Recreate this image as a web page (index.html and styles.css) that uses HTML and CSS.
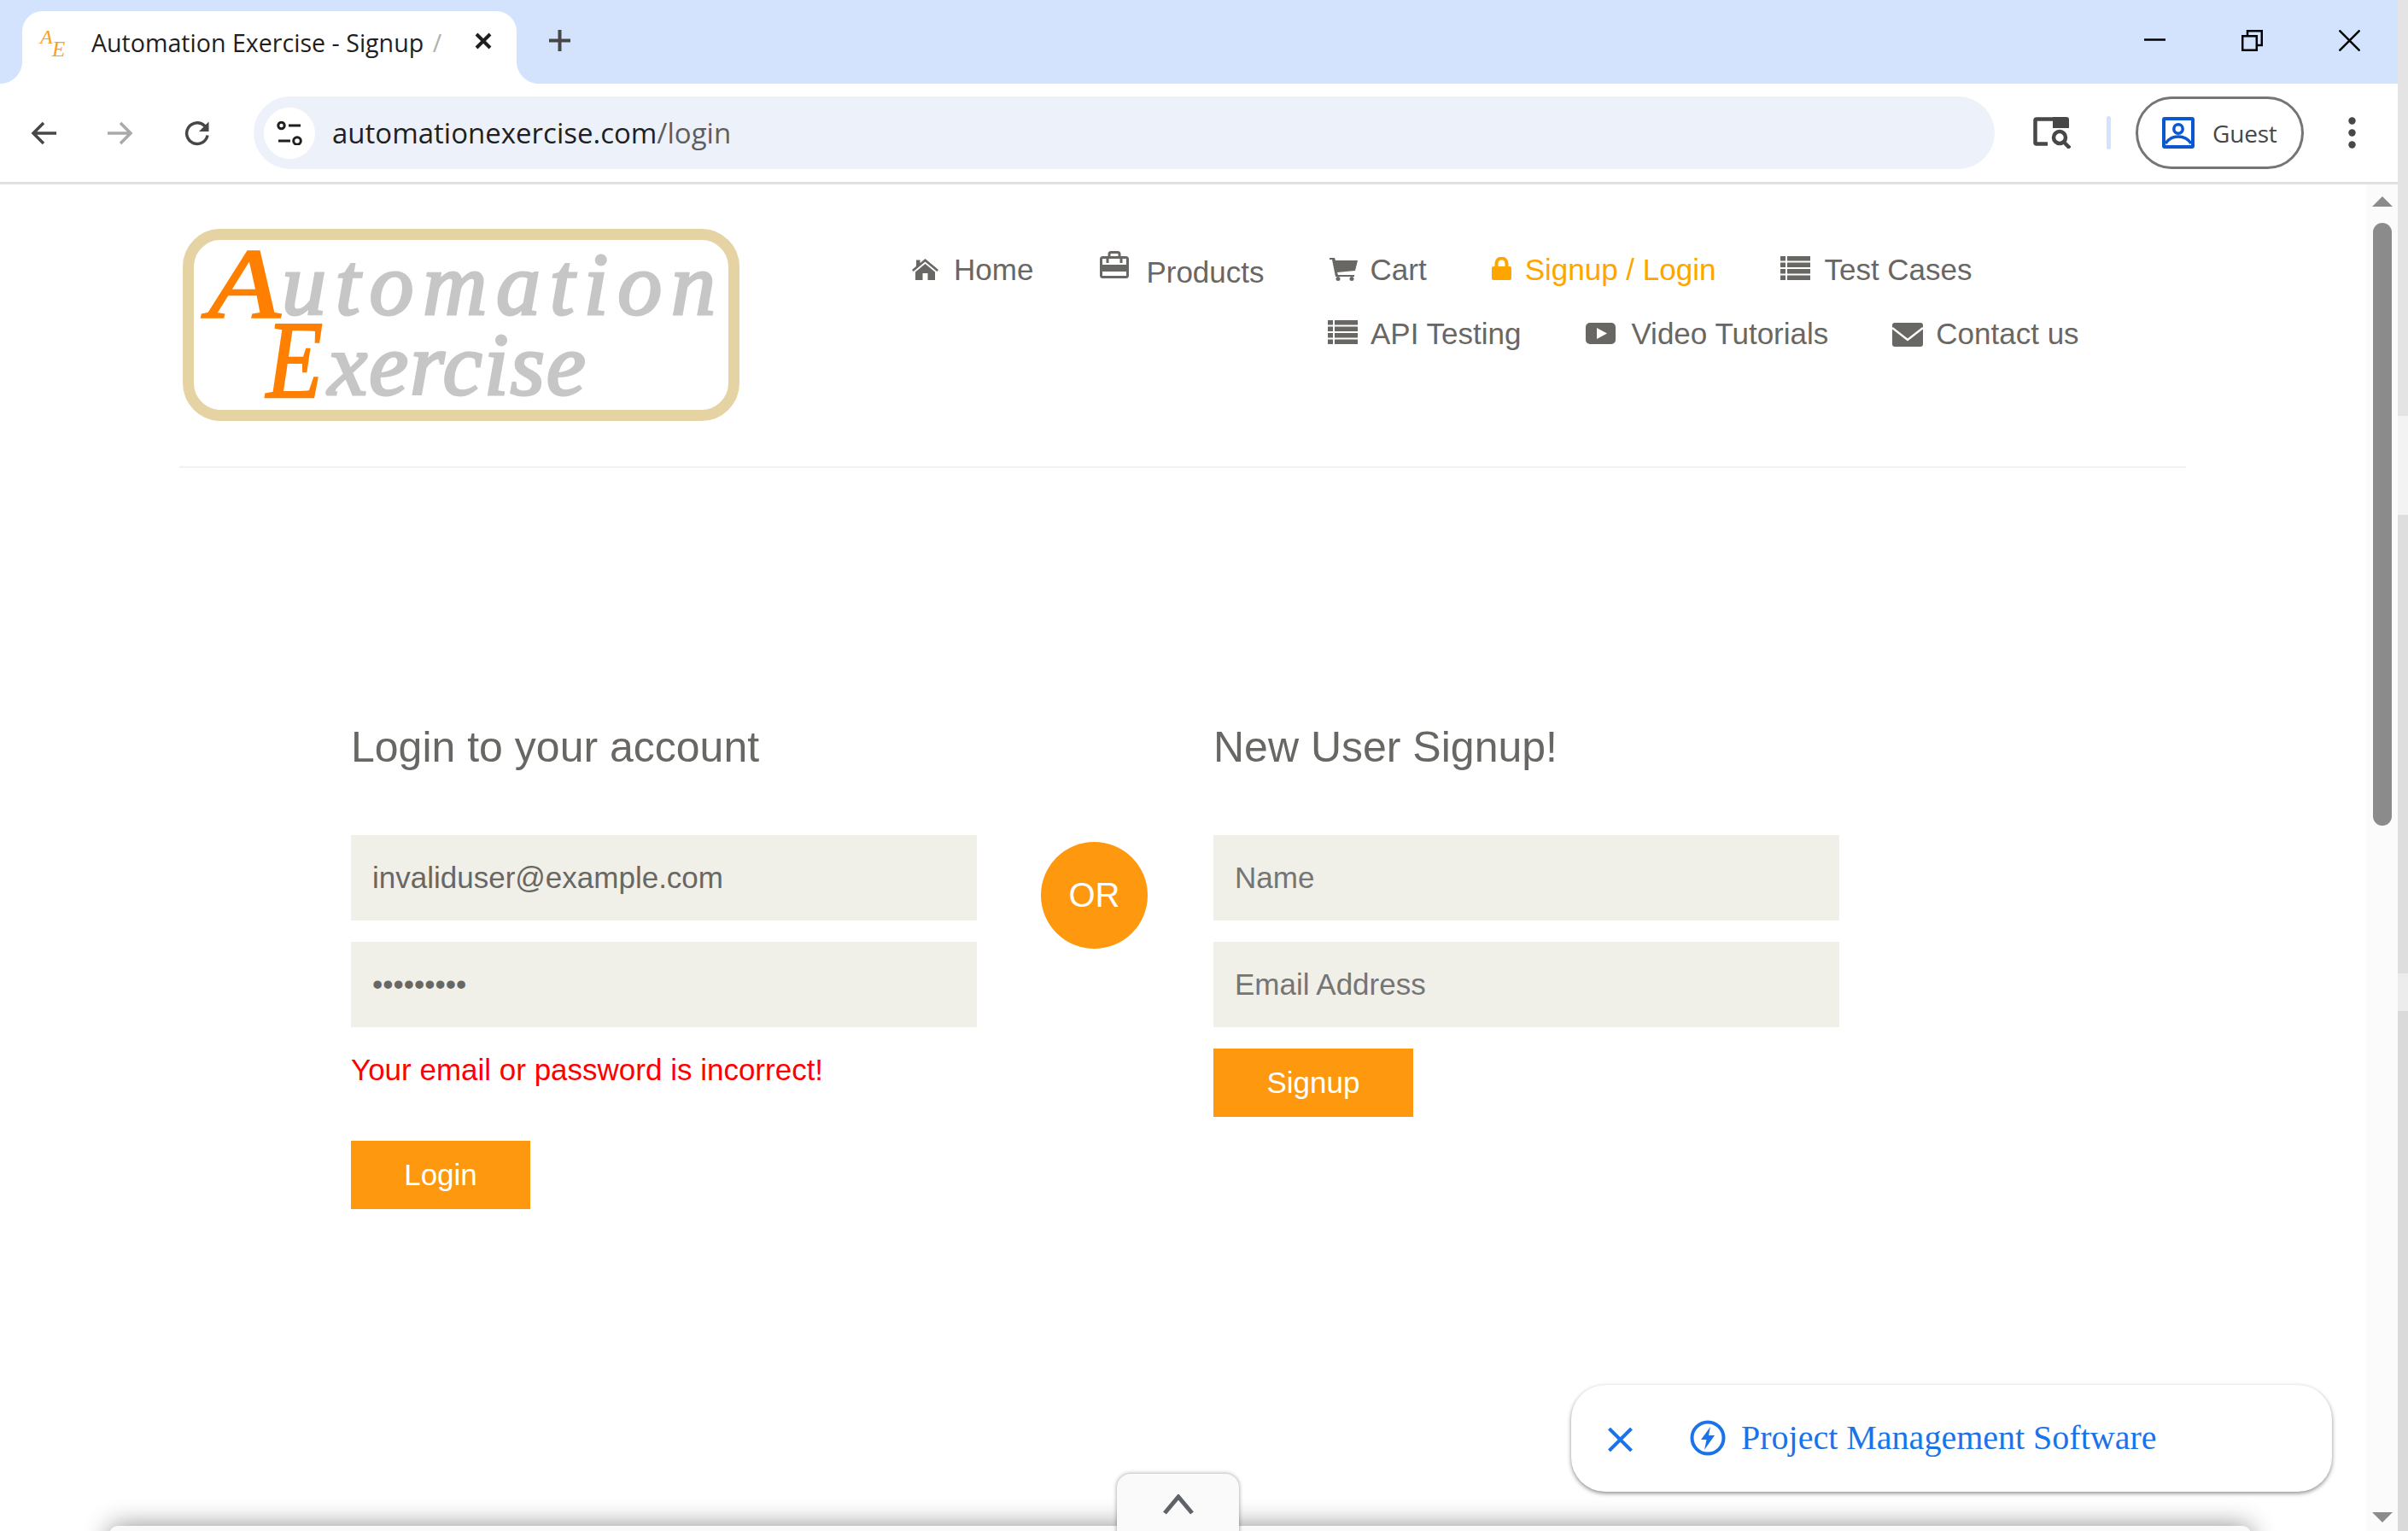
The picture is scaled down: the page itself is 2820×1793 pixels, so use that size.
FILE: index.html
```html
<!DOCTYPE html>
<html lang="en">
<head>
<meta charset="utf-8">
<title>Automation Exercise - Signup / Login</title>
<link rel="stylesheet" href="styles.css">
</head>
<body>
<div class="window">
  <div class="tabstrip">
    <div class="tab">
      <svg class="favicon" viewBox="0 0 34 34"><text x="0" y="17" class="fav-a">A</text><text x="14" y="32" class="fav-e">E</text></svg>
      <span class="tab-title">Automation Exercise - Signup <span class="tab-fade">/</span></span>
      <svg class="tab-close" viewBox="0 0 20 20"><path d="M2 2 18 18M18 2 2 18"/></svg>
    </div>
    <svg class="new-tab" viewBox="0 0 25 25"><path d="M12.5 0V25M0 12.5H25"/></svg>
    <div class="win-controls">
      <svg class="win-icon" viewBox="0 0 25 25"><path d="M0 11.5H25"/></svg>
      <svg class="win-icon" viewBox="0 0 25 25"><path d="M1.2 7.2H17.8V23.8H1.2ZM7 7V1.2H23.8V18H18"/></svg>
      <svg class="win-icon" viewBox="0 0 25 25"><path d="M.5.5 24.5 24.5M24.5.5.5 24.5"/></svg>
    </div>
  </div>
  <div class="toolbar">
    <svg class="nav-btn back" viewBox="0 0 30 28"><path d="M30 14H4M15 2 3 14 15 26"/></svg>
    <svg class="nav-btn forward" viewBox="0 0 30 28"><path d="M0 14H26M15 2 27 14 15 26"/></svg>
    <svg class="nav-btn reload" viewBox="0 0 30 30"><path d="M27 17.500A12.300 12.300 0 1 1 23.500 6.300L27 10"/><path class="reload-head" d="M28.500 1.500V13H17Z"/></svg>
    <div class="omnibox">
      <span class="site-chip"><svg class="tune" viewBox="0 0 30 28"><circle cx="5.5" cy="5" r="3.7"/><path d="M14 5H28M2 23H16"/><circle cx="24" cy="23" r="4.3"/></svg></span>
      <span class="url">automationexercise.com<span class="url-path">/login</span></span>
    </div>
    <svg class="lens" viewBox="0 0 44 37"><path class="lens-line" d="M23 2.5H4A1.5 1.5 0 0 0 2.5 4V30A1.5 1.5 0 0 0 4 31.5H17"/><path class="lens-fill" d="M23 0H39A3 3 0 0 1 42 3V13H23Z"/><circle class="lens-line" cx="31" cy="24" r="7"/><path class="lens-line" d="M36 29.500 43 36.500"/></svg>
    <span class="tool-sep"></span>
    <div class="profile">
      <svg class="avatar" viewBox="0 0 38 37"><rect width="38" height="37" rx="3" class="av-bg"/><rect x="4" y="4" width="30" height="29" class="av-in"/><circle cx="19" cy="14" r="5.200" class="av-line"/><path d="M4 31C8 25 13 23 19 23S30 25 34 31" class="av-line"/></svg>
      <span class="guest">Guest</span>
    </div>
    <svg class="dots" viewBox="0 0 9 37"><circle cx="4.500" cy="4.500" r="4.200"/><circle cx="4.500" cy="18.500" r="4.200"/><circle cx="4.500" cy="32.500" r="4.200"/></svg>
  </div>
  <div class="viewport">
    <main class="page">
      <header class="site-header">
        <svg class="logo" viewBox="0 0 652 225">
          <rect x="6.500" y="6.500" width="639" height="212" rx="38" class="logo-frame"/>
          <text x="30" y="104" class="logo-cap" textLength="84" lengthAdjust="spacingAndGlyphs">A</text>
          <text x="116" y="100" class="logo-word" textLength="508" lengthAdjust="spacing">utomation</text>
          <text x="98" y="197" class="logo-cap tall" textLength="66" lengthAdjust="spacingAndGlyphs">E</text>
          <text x="170" y="194" class="logo-word" textLength="302" lengthAdjust="spacing">xercise</text>
        </svg>
        <nav class="site-nav">
          <ul class="nav-row">
            <li class="nav-item"><svg class="ni i-home" viewBox="0 0 31 25"><path d="M15.500 0 31 13 29.300 15 15.500 3.500 1.700 15 0 13 5 8.800V1.500H9.500V5Z"/><path d="M15.500 6 27 15.500V25H18.500V17H12.500V25H4V15.500Z"/></svg>Home</li>
            <li class="nav-item products"><svg class="ni i-bag" viewBox="0 0 34 32"><path class="bag-line" d="M11 9V3.500A2 2 0 0 1 13 1.500H21A2 2 0 0 1 23 3.500V9"/><rect class="bag-line" x="1.500" y="7.500" width="31" height="23" rx="2"/><rect x="2" y="16" width="30" height="8"/><path d="M9 8V14M25 8V14" class="bag-line"/></svg>Products</li>
            <li class="nav-item"><svg class="ni i-cart" viewBox="0 0 33 27"><path d="M0 0H6L7 3H33L30 15 9 17 10 20H29V22H7L3 2H0Z"/><circle cx="10" cy="24.500" r="2.500"/><circle cx="26" cy="24.500" r="2.500"/></svg>Cart</li>
            <li class="nav-item active"><svg class="ni i-lock" viewBox="0 0 23 27"><path class="lock-line" d="M5.500 12V7.500A6 6 0 0 1 17.500 7.500V12"/><rect y="11" width="23" height="16" rx="2"/></svg>Signup / Login</li>
            <li class="nav-item"><svg class="ni i-list" viewBox="0 0 35 28"><path d="M0 0H6V5.500H0ZM8 0H35V5.500H8ZM0 7.500H6V13H0ZM8 7.500H35V13H8ZM0 15H6V20.500H0ZM8 15H35V20.500H8ZM0 22.500H6V28H0ZM8 22.500H35V28H8Z"/></svg>Test Cases</li>
          </ul>
          <ul class="nav-row second">
            <li class="nav-item"><svg class="ni i-list tight" viewBox="0 0 35 28"><path d="M0 0H6V5.500H0ZM8 0H35V5.500H8ZM0 7.500H6V13H0ZM8 7.500H35V13H8ZM0 15H6V20.500H0ZM8 15H35V20.500H8ZM0 22.500H6V28H0ZM8 22.500H35V28H8Z"/></svg>API Testing</li>
            <li class="nav-item"><svg class="ni i-video" viewBox="0 0 35 25"><rect width="35" height="25" rx="5"/><path class="knock" d="M13 6 25 12.500 13 19Z"/></svg>Video Tutorials</li>
            <li class="nav-item contact"><svg class="ni i-mail" viewBox="0 0 36 28"><rect width="36" height="28" rx="3"/><path class="mail-v" d="M0 6 18 20 36 6"/></svg>Contact us</li>
          </ul>
        </nav>
      </header>
      <section class="forms">
        <div class="form-col">
          <h2 class="form-title">Login to your account</h2>
          <input class="field" type="email" value="invaliduser@example.com" aria-label="Email">
          <input class="field second-field" type="password" value="123456789" aria-label="Password">
          <p class="form-error">Your email or password is incorrect!</p>
          <button class="cta login" type="button">Login</button>
        </div>
        <div class="or-badge">OR</div>
        <div class="form-col">
          <h2 class="form-title">New User Signup!</h2>
          <input class="field" type="text" placeholder="Name">
          <input class="field second-field" type="email" placeholder="Email Address">
          <button class="cta signup" type="button">Signup</button>
        </div>
      </section>
      <div class="anchor-ad"></div>
      <div class="anchor-tab"><svg class="chev" viewBox="0 0 36 24"><path d="M2 22 18 3 34 22"/></svg></div>
      <div class="side-ad">
        <svg class="ad-x" viewBox="0 0 29 28"><path d="M1.500 1 27.500 27M27.500 1 1.500 27"/></svg>
        <svg class="ad-bolt" viewBox="0 0 42 42"><circle cx="21" cy="21" r="18.500"/><path class="bolt" d="M24 8 13 23H19.500L17 35 29 18H22Z"/></svg>
        <span class="ad-text">Project Management Software</span>
      </div>
    </main>
    <div class="scrollbar">
      <span class="arrow up"></span>
      <span class="thumb"></span>
      <span class="arrow down"></span>
    </div>
  </div>
</div>
<div class="edge-strip">
  <span class="edge e1"></span><span class="edge e2"></span><span class="edge e3"></span><span class="edge e4"></span><span class="edge e5"></span>
</div>
</body>
</html>
```
FILE: styles.css
```css
* { box-sizing: border-box; }
html, body { margin: 0; padding: 0; }
body {
  width: 2820px; height: 1793px; overflow: hidden; display: flex;
  background: #fff; color: #696763;
  font-family: "Liberation Sans", Arial, sans-serif; font-size: 35px;
}
svg { display: block; flex: none; }
.window { width: 2808px; height: 1793px; display: flex; flex-direction: column; }

/* tab strip */
.tabstrip { height: 98px; flex: none; background: #d3e3fd; display: flex; align-items: flex-start; }
.tab {
  position: relative; width: 579px; height: 85px; margin: 13px 0 0 26px; padding-left: 21px;
  background: #fff; border-radius: 24px 24px 0 0; display: flex; align-items: center;
}
.tab::before, .tab::after { content: ""; position: absolute; bottom: 0; width: 26px; height: 26px; }
.tab::before { left: -26px; background: radial-gradient(circle at 0 0, #d3e3fd 25.5px, #fff 26.5px); }
.tab::after { right: -26px; background: radial-gradient(circle at 100% 0, #d3e3fd 25.5px, #fff 26.5px); }
.favicon { width: 34px; height: 34px; margin-bottom: 10px; overflow: visible; }
.fav-a, .fav-e { font-family: "Liberation Serif", serif; font-style: italic; fill: #f9a11b; }
.fav-a { font-size: 24px; }
.fav-e { font-size: 25px; }
.tab-title {
  flex: 1; margin: 0 0 11px 26px; font-family: "Open Sans", sans-serif; font-size: 28.600px; color: #1f1f1f;
  white-space: nowrap; overflow: hidden; line-height: 42px;
}
.tab-fade { color: #b0b0b0; margin-left: 3px; }
.tab-close { width: 20px; height: 20px; margin: 0 29px 16px 0; fill: none; stroke: #1f1f1f; stroke-width: 4; }
.new-tab { width: 25px; height: 25px; margin: 35px 0 0 38px; fill: none; stroke: #474747; stroke-width: 4; }
.win-controls { margin-left: auto; padding: 35px 44px 0 0; display: flex; gap: 89px; }
.win-icon { width: 25px; height: 25px; fill: none; stroke: #000; stroke-width: 2.500; }

/* toolbar */
.toolbar { height: 118px; flex: none; background: #fff; border-bottom: 3px solid #e0e0e0; display: flex; align-items: center; }
.nav-btn { width: 30px; height: 28px; fill: none; stroke-width: 3.500; }
.back { margin-left: 36px; stroke: #474747; }
.forward { margin-left: 60px; stroke: #a9a9a9; }
.reload { margin-left: 60px; height: 30px; stroke: #474747; }
.reload-head { fill: #474747; stroke: none; }
.omnibox {
  width: 2039px; height: 85px; margin-left: 51px; padding-left: 12px; border-radius: 43px;
  background: #edf2fa; display: flex; align-items: center;
}
.site-chip { width: 60px; height: 60px; border-radius: 50%; background: #fff; display: flex; align-items: center; justify-content: center; }
.tune { width: 30px; height: 28px; fill: none; stroke: #1f1f1f; stroke-width: 3; }
.url { margin-left: 20px; font-family: "Open Sans", sans-serif; font-size: 33px; color: #1f1f1f; white-space: nowrap; }
.url-path { color: #5e5e5e; }
.lens { width: 44px; height: 37px; margin-left: 45px; }
.lens-line { fill: none; stroke: #474747; stroke-width: 4.500; }
.lens-fill { fill: #474747; }
.tool-sep { width: 5px; height: 39px; margin-left: 42px; border-radius: 3px; background: #d3e3fd; }
.profile { width: 197px; height: 85px; margin-left: 29px; padding-left: 28px; border: 3px solid #757575; border-radius: 43px; display: flex; align-items: center; }
.avatar { width: 38px; height: 37px; }
.av-bg { fill: #0b57d0; }
.av-in { fill: #fff; }
.av-line { fill: none; stroke: #0b57d0; stroke-width: 3.500; }
.guest { margin-left: 21px; font-family: "Open Sans", sans-serif; font-size: 28px; color: #474747; letter-spacing: -.2px; }
.dots { width: 9px; height: 37px; margin-left: 52px; fill: #474747; }

/* viewport */
.viewport { flex: 1; min-height: 0; display: flex; }
.page { position: relative; flex: 1; min-width: 0; overflow: hidden; background: #fff; }
.scrollbar { width: 37px; flex: none; background: #fbfbfb; display: flex; flex-direction: column; align-items: center; }
.arrow { width: 0; height: 0; border-left: 12px solid transparent; border-right: 12px solid transparent; }
.arrow.up { margin-top: 14px; border-bottom: 12px solid #8b8b8b; }
.arrow.down { margin-top: auto; margin-bottom: 10px; border-top: 12px solid #8b8b8b; }
.thumb { width: 22px; height: 706px; margin-top: 19px; border-radius: 11px; background: #8b8b8b; }
.edge-strip { width: 12px; height: 1793px; display: flex; flex-direction: column; }
.edge { display: block; }
.e1 { height: 487px; background: #e4e4e4; }
.e2 { height: 116px; background: #f3f3f3; }
.e3 { height: 537px; background: #dedede; }
.e4 { height: 44px; background: #ececec; }
.e5 { height: 609px; background: #dadada; }

/* site header */
.site-header { width: 2350px; height: 332px; margin-left: 210px; padding: 52px 0 0 4px; border-bottom: 2px solid #f2f2f2; display: flex; align-items: flex-start; }
.logo { width: 652px; height: 225px; }
.logo-frame { fill: #fff; stroke: #e5d3a3; stroke-width: 13; }
.logo-cap, .logo-word { font-family: "Liberation Serif", serif; font-style: italic; font-weight: 400; stroke-width: 2.500; }
.logo-cap { font-size: 116px; fill: #ff8000; stroke: #ff8000; }
.logo-cap.tall { font-size: 130px; }
.logo-word { font-size: 104px; fill: #c6c6c6; stroke: #c6c6c6; stroke-width: 3; }
.site-nav { margin: 10px 0 0 202px; }
.nav-row { list-style: none; margin: 0; padding: 0; display: flex; gap: 76px; height: 75px; white-space: nowrap; }
.nav-row.second { margin-left: 487px; }
.nav-item { height: 75px; display: flex; align-items: center; }
.nav-item.products { margin-left: 2px; margin-top: 3px; }
.nav-item.contact { margin-left: -1px; }
.nav-item.active { color: #ffa500; }
.ni { fill: #696763; margin-right: 16px; }
.active .ni { fill: #ffa500; }
.i-home { width: 31px; height: 25px; margin-right: 18px; }
.i-bag { width: 34px; height: 32px; margin-right: 20px; margin-top: -17px; }
.bag-line { fill: none; stroke: #696763; stroke-width: 3; }
.i-cart { width: 33px; height: 27px; margin-right: 15px; }
.i-lock { width: 23px; height: 27px; margin-top: -2px; }
.lock-line { fill: none; stroke: #ffa500; stroke-width: 4; }
.i-list { width: 35px; height: 28px; margin-top: -3px; margin-right: 16px; }
.i-list.tight { margin-right: 15px; }
.i-video { width: 35px; height: 25px; margin-right: 18px; }
.knock { fill: #fff; }
.i-mail { width: 36px; height: 28px; margin-top: 3px; margin-right: 15px; }
.mail-v { fill: none; stroke: #fff; stroke-width: 2.500; }

/* forms */
.forms { padding: 297px 0 0 411px; display: flex; align-items: flex-start; }
.form-col { width: 733px; }
.form-title { margin: 0 0 73px; font-size: 50px; line-height: 60px; font-weight: 400; color: #696763; }
.field {
  display: block; width: 100%; height: 100px; padding: 0 25px; border: 0; border-radius: 0; outline: 0;
  background: #f0f0e9; color: #696763; font-family: inherit; font-size: 35px;
}
.field::placeholder { color: #757575; opacity: 1; }
.second-field { margin-top: 25px; }
.form-error { margin: 25px 0 0; line-height: 50px; color: #f00; }
.cta { display: block; height: 80px; padding: 0; border: 0; border-radius: 0; background: #fe980f; color: #fff; font-family: inherit; font-size: 35px; }
.cta.login { width: 210px; margin-top: 58px; }
.cta.signup { width: 234px; margin-top: 25px; }
.or-badge {
  width: 125px; height: 125px; margin: 141px 77px 0 75px; border-radius: 50%; flex: none;
  background: #fe980f; color: #fff; font-size: 40px; display: flex; align-items: center; justify-content: center;
}

/* overlays */
.anchor-ad { position: absolute; left: 128px; top: 1571px; width: 2508px; height: 40px; border-radius: 10px 10px 0 0; background: #fafafa; box-shadow: 0 0 30px rgba(0,0,0,.45); }
.anchor-tab { position: absolute; left: 1308px; top: 1510px; width: 143px; height: 80px; border-radius: 16px 16px 0 0; background: #fafafa; box-shadow: 0 0 5px rgba(0,0,0,.4); display: flex; justify-content: center; padding-top: 24px; }
.chev { width: 36px; height: 24px; fill: none; stroke: #5f6368; stroke-width: 5; }
.side-ad {
  position: absolute; left: 1840px; top: 1406px; width: 891px; height: 125px; border-radius: 40px;
  background: #fff; box-shadow: 0 2px 5px rgba(0,0,0,.45); display: flex; align-items: center; padding-left: 43px;
}
.ad-x { width: 29px; height: 28px; fill: none; stroke: #1a73e8; stroke-width: 4; margin-top: 2px; }
.ad-bolt { width: 42px; height: 42px; margin-left: 67px; fill: none; stroke: #1a73e8; stroke-width: 4; margin-top: -1px; }
.bolt { fill: #1a73e8; stroke: none; }
.ad-text { margin-left: 18px; font-family: "Liberation Serif", serif; font-size: 40px; color: #1a73e8; white-space: nowrap; margin-top: -2px; }
```
